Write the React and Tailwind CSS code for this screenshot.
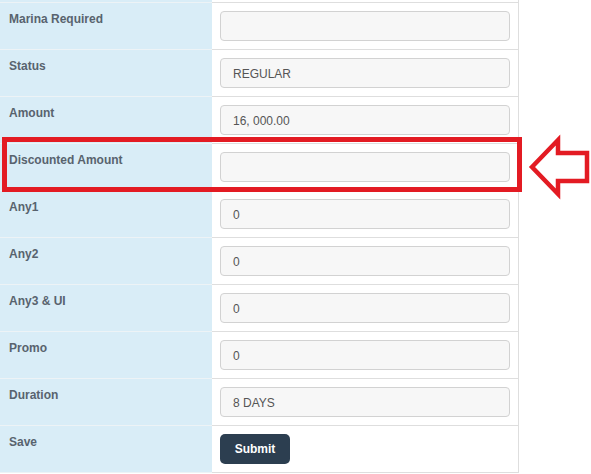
import React from "react";

const rows = [
  { label: "Marina Required", value: "" },
  { label: "Status", value: "REGULAR" },
  { label: "Amount", value: "16, 000.00" },
  { label: "Discounted Amount", value: "" },
  { label: "Any1", value: "0" },
  { label: "Any2", value: "0" },
  { label: "Any3 & UI", value: "0" },
  { label: "Promo", value: "0" },
  { label: "Duration", value: "8 DAYS" },
];

function Row({ label, children }) {
  return (
    <div className="flex">
      <div className="w-[212px] shrink-0 bg-[#d9edf7] border-t border-[#edf3f6] pl-[9px] pr-2 pt-[8px] pb-2 text-[12px] leading-[17px] font-bold text-[#58636e]">
        {label}
      </div>
      <div className="w-[307px] shrink-0 border-t border-r border-[#dedede] bg-white p-2">
        {children}
      </div>
    </div>
  );
}

export default function App() {
  return (
    <div className="relative w-[591px] h-[474px] bg-white overflow-hidden font-['Liberation_Sans',Arial,sans-serif]">
      <div className="flex flex-col w-[519px]">
        <div className="flex h-[2px]">
          <div className="w-[212px] bg-[#d9edf7]" />
          <div className="w-[307px] border-r border-[#dedede]" />
        </div>
        {rows.map((r) => (
          <Row key={r.label} label={r.label}>
            <div className="h-[30px] w-[290px] rounded-[4px] border border-[#d2d2d2] bg-[#f7f7f7] px-3 pt-px flex items-center text-[12px] text-[#555555]">
              {r.value}
            </div>
          </Row>
        ))}
        <Row label="Save">
          <button className="h-[30px] w-[70px] rounded-[5px] bg-[#2c3e50] text-white text-[12px] font-bold flex items-center justify-center">
            Submit
          </button>
        </Row>
        <div className="flex">
          <div className="w-[212px] h-px bg-[#edf3f6]" />
          <div className="w-[307px] h-px bg-[#dedede]" />
        </div>
      </div>

      <div className="absolute left-[2px] top-[137px] w-[520px] h-[55px] border-[5px] border-[#e31b23]" />

      <svg className="absolute left-[526px] top-[134px]" width="65" height="66" viewBox="526 134 65 66">
        <polygon
          points="532,167 558,140 558,153 587,153 587,181 558,181 558,194"
          fill="none"
          stroke="#e31b23"
          strokeWidth="4.5"
          strokeLinejoin="miter"
        />
      </svg>
    </div>
  );
}
